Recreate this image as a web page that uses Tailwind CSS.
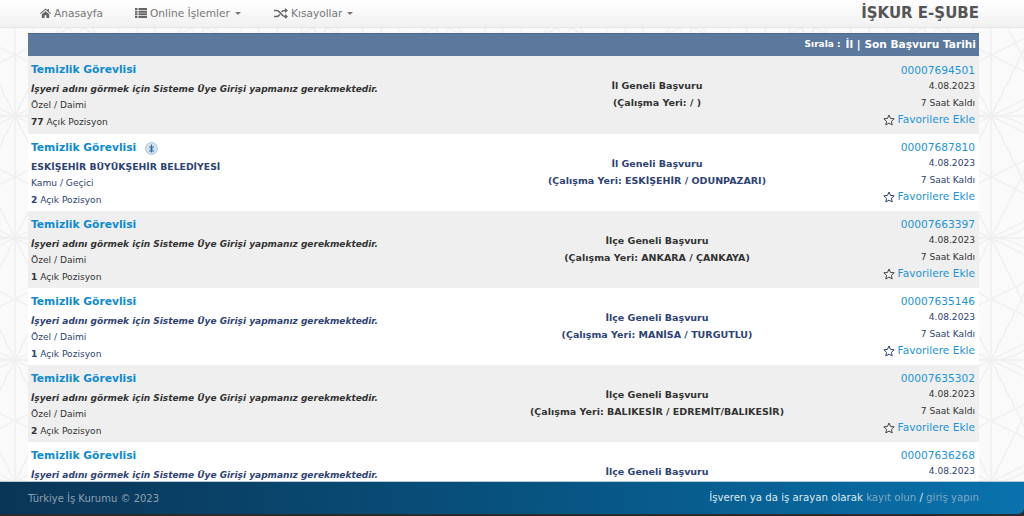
<!DOCTYPE html>
<html lang="tr">
  <head>
    <meta charset="UTF-8" />
    <title>İŞKUR E-Şube</title>
    <script src="https://cdn.jsdelivr.net/npm/@tailwindcss/browser@4"></script>
  </head>
  <body class="h-screen w-full overflow-hidden flex flex-col bg-[#fafafa] font-['DejaVu_Sans',sans-serif]">
    <!-- navbar -->
    <nav class="h-[28px] shrink-0 flex items-center justify-between pl-[40px] pr-[45px] bg-gradient-to-b from-white to-[#f1f1f1] border-b border-[#e6e6e6] text-[10.600px] text-[#777777] relative z-10">
      <div class="flex items-center">
        <a class="flex items-center gap-[3px] w-[95px]">
          <svg class="w-[11px] h-[10px]" viewBox="0 0 24 22" fill="#666"><path d="M12 1 0 11.500l1.500 1.700L12 4l10.500 9.200L24 11.500 19.500 7.600V2h-3v3L12 1ZM4 14v8h6v-6h4v6h6v-8l-8-7-8 7Z"/></svg>
          Anasayfa
        </a>
        <a class="flex items-center gap-[3px] w-[139px]">
          <svg class="w-[12px] h-[10px]" viewBox="0 0 24 20" fill="#666"><path d="M0 0h5v4H0zM7 0h17v4H7zM0 5.300h5v4H0zM7 5.300h17v4H7zM0 10.600h5v4H0zM7 10.600h17v4H7zM0 16h5v4H0zM7 16h17v4H7z"/></svg>
          Online İşlemler
          <span class="ml-[2px] border-x-[3px] border-x-transparent border-t-[3px] border-t-[#777777]"></span>
        </a>
        <a class="flex items-center gap-[3px]">
          <svg class="w-[14px] h-[11px]" viewBox="0 0 28 22" fill="none" stroke="#666" stroke-width="3"><path d="M0 5h6c6 0 9 12 15 12h3M0 17h6c2.500 0 4-2 5.500-4M15 8c1.500-1.700 3-3 6-3h3"/><path d="M22 0l6 5-6 5zM22 12l6 5-6 5z" fill="#666" stroke="none"/></svg>
          Kısayollar
          <span class="ml-[2px] border-x-[3px] border-x-transparent border-t-[3px] border-t-[#777777]"></span>
        </a>
      </div>
      <div class="text-[15px] font-bold text-[#555555]">İŞKUR E-ŞUBE</div>
    </nav>

    <main class="relative flex-1 min-h-0 overflow-hidden pt-[5px] pl-[28px] pr-[45px]">
      <!-- faint background pattern -->
      <svg class="absolute inset-0 w-full h-full" fill="none">
        <defs>
          <pattern id="stars" width="122" height="122" patternUnits="userSpaceOnUse" patternTransform="translate(15 88)">
            <g stroke="#f0f0f0" stroke-width="1.500">
              <path d="M0 0V122M122 0V122M0 0H122M0 122H122M0 0 61 122M61 0 0 122M122 0 61 122M61 0 122 122M0 0 122 61M0 61 122 0M0 61 122 122M0 122 122 61"/>
              <circle cx="0" cy="61" r="61"/>
              <circle cx="122" cy="61" r="61"/>
            </g>
          </pattern>
        </defs>
        <rect width="100%" height="100%" fill="url(#stars)"/>
      </svg>
      <div class="relative">
        <div class="h-[23px] bg-[#5b789d] border-t border-[#4d688b] flex items-center justify-end pr-[3px] text-white font-bold">
          <span class="text-[9px] mr-[5px]">Sırala :</span>
          <span class="text-[10.600px]">İl | Son Başvuru Tarihi</span>
        </div>

        <section class="h-[78px] bg-[#efefef] text-[#333333] grid grid-cols-[455px_342px_1fr] pl-[3px] pr-[4px]">
          <div class="flex flex-col">
            <a class="mt-[6px] h-[16px] leading-[16px] text-[10.700px] font-bold text-[#0d8ad0]">Temizlik Görevlisi</a>
            <b class="mt-[3px] h-[16px] leading-[16px] text-[9px] italic">İşyeri adını görmek için Sisteme Üye Girişi yapmanız gerekmektedir.</b>
            <span class="h-[17px] leading-[17px] text-[9.100px]">Özel / Daimi</span>
            <span class="h-[16px] leading-[16px] text-[9.100px]"><b>77</b> Açık Pozisyon</span>
          </div>
          <div class="flex flex-col items-center text-[9.500px] font-bold pt-[21px]">
            <span class="h-[17px] leading-[17px]">İl Geneli Başvuru</span>
            <span class="h-[17px] leading-[17px]">(Çalışma Yeri: / )</span>
          </div>
          <div class="flex flex-col items-end">
            <a class="mt-[6px] h-[16px] leading-[16px] text-[10.600px] text-[#1d93d8]">00007694501</a>
            <span class="h-[17px] leading-[17px] text-[9.100px]">4.08.2023</span>
            <span class="h-[16px] leading-[16px] text-[9.100px]">7 Saat Kaldı</span>
            <span class="h-[17px] leading-[17px] text-[10.600px] text-[#1d93d8] flex items-center gap-[3px]">
              <svg class="w-[12px] h-[12px]" viewBox="0 0 24 24" fill="none" stroke="#444" stroke-width="2"><path d="m12 2 3 6.800 7.400.8-5.500 5 1.500 7.300-6.400-3.700-6.400 3.700 1.500-7.300-5.500-5L9 8.800z"/></svg>
              Favorilere Ekle
            </span>
          </div>
        </section>

        <section class="h-[77px] bg-white text-[#2e4372] grid grid-cols-[455px_342px_1fr] pl-[3px] pr-[4px]">
          <div class="flex flex-col">
            <div class="mt-[6px] h-[16px] flex items-center gap-[9px]">
              <a class="leading-[16px] text-[10.700px] font-bold text-[#0d8ad0]">Temizlik Görevlisi</a>
              <svg class="w-[13px] h-[13px]" viewBox="0 0 26 26"><circle cx="13" cy="13" r="12" fill="#d5e3ee" stroke="#9db9cf" stroke-width="1.500"/><path d="M13 5v16M8 10h10M8 18h10M10 14h6" stroke="#2a6a9c" stroke-width="2" fill="none"/></svg>
            </div>
            <b class="mt-[3px] h-[16px] leading-[16px] text-[9.300px]">ESKİŞEHİR BÜYÜKŞEHİR BELEDİYESİ</b>
            <span class="h-[17px] leading-[17px] text-[9.100px]">Kamu / Geçici</span>
            <span class="h-[16px] leading-[16px] text-[9.100px]"><b>2</b> Açık Pozisyon</span>
          </div>
          <div class="flex flex-col items-center text-[9.500px] font-bold pt-[21px]">
            <span class="h-[17px] leading-[17px]">İl Geneli Başvuru</span>
            <span class="h-[17px] leading-[17px]">(Çalışma Yeri: ESKİŞEHİR / ODUNPAZARI)</span>
          </div>
          <div class="flex flex-col items-end">
            <a class="mt-[5px] h-[16px] leading-[16px] text-[10.600px] text-[#1d93d8]">00007687810</a>
            <span class="h-[17px] leading-[17px] text-[9.100px]">4.08.2023</span>
            <span class="h-[16px] leading-[16px] text-[9.100px]">7 Saat Kaldı</span>
            <span class="h-[17px] leading-[17px] text-[10.600px] text-[#1d93d8] flex items-center gap-[3px]">
              <svg class="w-[12px] h-[12px]" viewBox="0 0 24 24" fill="none" stroke="#2e4372" stroke-width="2"><path d="m12 2 3 6.800 7.400.8-5.500 5 1.500 7.300-6.400-3.700-6.400 3.700 1.500-7.300-5.500-5L9 8.800z"/></svg>
              Favorilere Ekle
            </span>
          </div>
        </section>

        <section class="h-[77px] bg-[#efefef] text-[#333333] grid grid-cols-[455px_342px_1fr] pl-[3px] pr-[4px]">
          <div class="flex flex-col">
            <a class="mt-[6px] h-[16px] leading-[16px] text-[10.700px] font-bold text-[#0d8ad0]">Temizlik Görevlisi</a>
            <b class="mt-[3px] h-[16px] leading-[16px] text-[9px] italic">İşyeri adını görmek için Sisteme Üye Girişi yapmanız gerekmektedir.</b>
            <span class="h-[17px] leading-[17px] text-[9.100px]">Özel / Daimi</span>
            <span class="h-[16px] leading-[16px] text-[9.100px]"><b>1</b> Açık Pozisyon</span>
          </div>
          <div class="flex flex-col items-center text-[9.500px] font-bold pt-[21px]">
            <span class="h-[17px] leading-[17px]">İlçe Geneli Başvuru</span>
            <span class="h-[17px] leading-[17px]">(Çalışma Yeri: ANKARA / ÇANKAYA)</span>
          </div>
          <div class="flex flex-col items-end">
            <a class="mt-[5px] h-[16px] leading-[16px] text-[10.600px] text-[#1d93d8]">00007663397</a>
            <span class="h-[17px] leading-[17px] text-[9.100px]">4.08.2023</span>
            <span class="h-[16px] leading-[16px] text-[9.100px]">7 Saat Kaldı</span>
            <span class="h-[17px] leading-[17px] text-[10.600px] text-[#1d93d8] flex items-center gap-[3px]">
              <svg class="w-[12px] h-[12px]" viewBox="0 0 24 24" fill="none" stroke="#444" stroke-width="2"><path d="m12 2 3 6.800 7.400.8-5.500 5 1.500 7.300-6.400-3.700-6.400 3.700 1.500-7.300-5.500-5L9 8.800z"/></svg>
              Favorilere Ekle
            </span>
          </div>
        </section>

        <section class="h-[77px] bg-white text-[#2e4372] grid grid-cols-[455px_342px_1fr] pl-[3px] pr-[4px]">
          <div class="flex flex-col">
            <a class="mt-[6px] h-[16px] leading-[16px] text-[10.700px] font-bold text-[#0d8ad0]">Temizlik Görevlisi</a>
            <b class="mt-[3px] h-[16px] leading-[16px] text-[9px] italic">İşyeri adını görmek için Sisteme Üye Girişi yapmanız gerekmektedir.</b>
            <span class="h-[17px] leading-[17px] text-[9.100px]">Özel / Daimi</span>
            <span class="h-[16px] leading-[16px] text-[9.100px]"><b>1</b> Açık Pozisyon</span>
          </div>
          <div class="flex flex-col items-center text-[9.500px] font-bold pt-[21px]">
            <span class="h-[17px] leading-[17px]">İlçe Geneli Başvuru</span>
            <span class="h-[17px] leading-[17px]">(Çalışma Yeri: MANİSA / TURGUTLU)</span>
          </div>
          <div class="flex flex-col items-end">
            <a class="mt-[5px] h-[16px] leading-[16px] text-[10.600px] text-[#1d93d8]">00007635146</a>
            <span class="h-[17px] leading-[17px] text-[9.100px]">4.08.2023</span>
            <span class="h-[16px] leading-[16px] text-[9.100px]">7 Saat Kaldı</span>
            <span class="h-[17px] leading-[17px] text-[10.600px] text-[#1d93d8] flex items-center gap-[3px]">
              <svg class="w-[12px] h-[12px]" viewBox="0 0 24 24" fill="none" stroke="#2e4372" stroke-width="2"><path d="m12 2 3 6.800 7.400.8-5.500 5 1.500 7.300-6.400-3.700-6.400 3.700 1.500-7.300-5.500-5L9 8.800z"/></svg>
              Favorilere Ekle
            </span>
          </div>
        </section>

        <section class="h-[77px] bg-[#efefef] text-[#333333] grid grid-cols-[455px_342px_1fr] pl-[3px] pr-[4px]">
          <div class="flex flex-col">
            <a class="mt-[6px] h-[16px] leading-[16px] text-[10.700px] font-bold text-[#0d8ad0]">Temizlik Görevlisi</a>
            <b class="mt-[3px] h-[16px] leading-[16px] text-[9px] italic">İşyeri adını görmek için Sisteme Üye Girişi yapmanız gerekmektedir.</b>
            <span class="h-[17px] leading-[17px] text-[9.100px]">Özel / Daimi</span>
            <span class="h-[16px] leading-[16px] text-[9.100px]"><b>2</b> Açık Pozisyon</span>
          </div>
          <div class="flex flex-col items-center text-[9.500px] font-bold pt-[21px]">
            <span class="h-[17px] leading-[17px]">İlçe Geneli Başvuru</span>
            <span class="h-[17px] leading-[17px]">(Çalışma Yeri: BALIKESİR / EDREMİT/BALIKESİR)</span>
          </div>
          <div class="flex flex-col items-end">
            <a class="mt-[5px] h-[16px] leading-[16px] text-[10.600px] text-[#1d93d8]">00007635302</a>
            <span class="h-[17px] leading-[17px] text-[9.100px]">4.08.2023</span>
            <span class="h-[16px] leading-[16px] text-[9.100px]">7 Saat Kaldı</span>
            <span class="h-[17px] leading-[17px] text-[10.600px] text-[#1d93d8] flex items-center gap-[3px]">
              <svg class="w-[12px] h-[12px]" viewBox="0 0 24 24" fill="none" stroke="#444" stroke-width="2"><path d="m12 2 3 6.800 7.400.8-5.500 5 1.500 7.300-6.400-3.700-6.400 3.700 1.500-7.300-5.500-5L9 8.800z"/></svg>
              Favorilere Ekle
            </span>
          </div>
        </section>

        <section class="h-[77px] bg-white text-[#2e4372] grid grid-cols-[455px_342px_1fr] pl-[3px] pr-[4px]">
          <div class="flex flex-col">
            <a class="mt-[6px] h-[16px] leading-[16px] text-[10.700px] font-bold text-[#0d8ad0]">Temizlik Görevlisi</a>
            <b class="mt-[3px] h-[16px] leading-[16px] text-[9px] italic">İşyeri adını görmek için Sisteme Üye Girişi yapmanız gerekmektedir.</b>
          </div>
          <div class="flex flex-col items-center text-[9.500px] font-bold pt-[21px]">
            <span class="h-[17px] leading-[17px]">İlçe Geneli Başvuru</span>
          </div>
          <div class="flex flex-col items-end">
            <a class="mt-[5px] h-[16px] leading-[16px] text-[10.600px] text-[#1d93d8]">00007636268</a>
            <span class="h-[17px] leading-[17px] text-[9.100px]">4.08.2023</span>
          </div>
        </section>
      </div>
    </main>

    <footer class="h-[35px] shrink-0 relative z-10 flex flex-col bg-[#2b2b2b]">
      <div class="h-[33px] flex items-center justify-between pl-[28px] pr-[45px] border-t border-[#b9c9d6] rounded-br-[6px] bg-gradient-to-r from-[#0a3556] via-[#07527f] to-[#0a72ad] text-[10px]">
        <span class="text-[#8ca0b0]">Türkiye İş Kurumu © 2023</span>
        <span class="text-[10.200px] text-[#dfe9f0]">İşveren ya da iş arayan olarak <a class="text-[#7fa8c4]">kayıt olun</a> / <a class="text-[#7fa8c4]">giriş yapın</a></span>
      </div>
    </footer>
  </body>
</html>
